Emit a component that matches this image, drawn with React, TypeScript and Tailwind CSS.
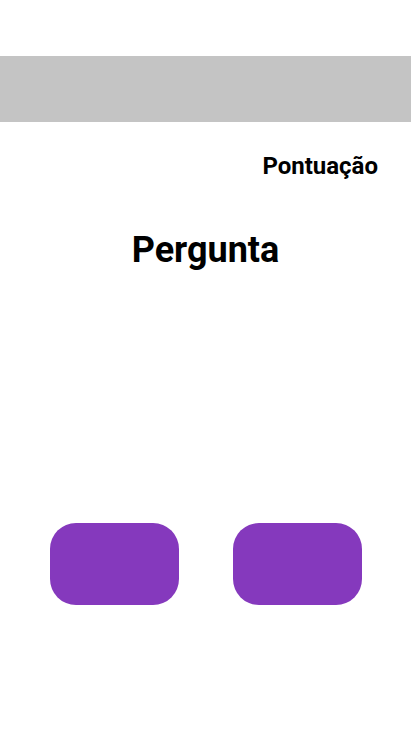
export default function App() {
  return (
    <div className="flex min-h-[731px] w-full flex-col bg-white font-['Roboto',sans-serif] text-black">
      <div className="mt-14 h-[66px] w-full bg-[#c4c4c4]" />

      <div className="mt-[29px] flex justify-end pr-[33px]">
        <span className="text-[24px] font-bold leading-[30px]">Pontuação</span>
      </div>

      <h1 className="mt-[49px] text-center text-[36px] font-bold leading-[40px]">Pergunta</h1>

      <div className="mt-[253px] flex justify-center gap-[54px]">
        <button className="h-[82px] w-[129px] rounded-[26px] bg-[#8539bd]" />
        <button className="h-[82px] w-[129px] rounded-[26px] bg-[#8539bd]" />
      </div>
    </div>
  );
}
